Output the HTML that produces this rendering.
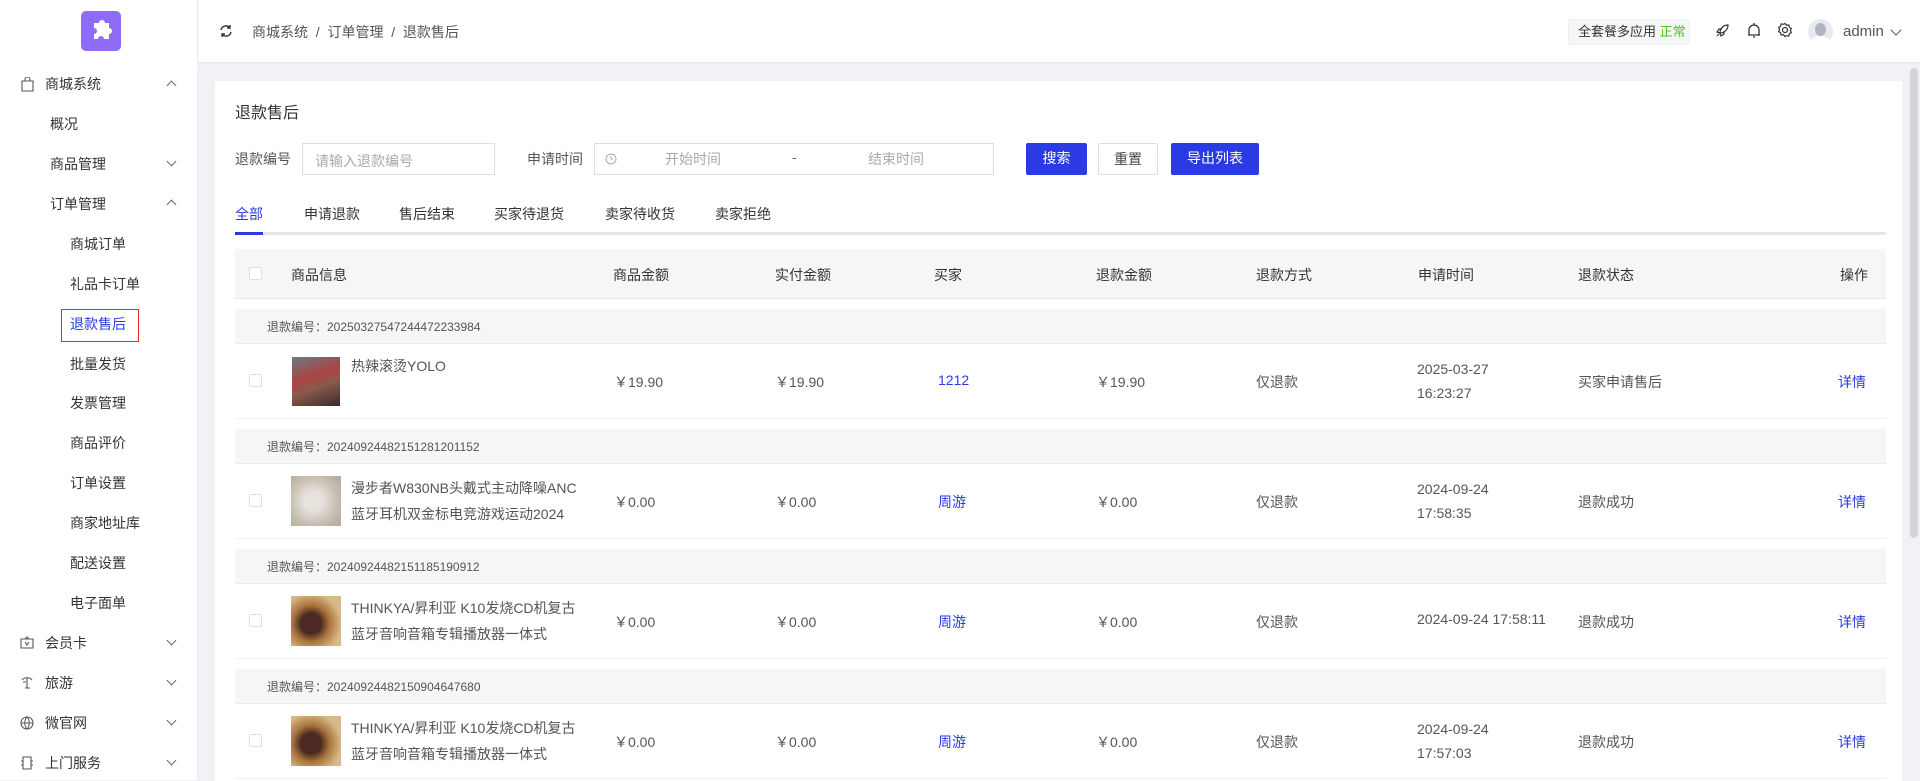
<!DOCTYPE html>
<html><head><meta charset="utf-8">
<style>
*{box-sizing:border-box;margin:0;padding:0}
body{width:1920px;height:780px;overflow:hidden;background:#f0f2f5;font-family:"Liberation Sans","Noto Sans CJK SC",sans-serif;font-size:14px;color:#333;position:relative}
.a{position:absolute;white-space:nowrap}
#side{position:absolute;left:0;top:0;width:198px;height:780px;background:#fff;border-right:1px solid #eef0f3}
#head{position:absolute;left:198px;top:0;width:1722px;height:62px;background:#fff;box-shadow:0 1px 3px rgba(0,0,0,.06)}
#card{position:absolute;left:215px;top:81px;width:1687px;height:700px;background:#fff}
.si{position:absolute;font-size:14px;color:#333;line-height:20px}
.chev{position:absolute;left:168px;width:7px;height:7px;border-left:1px solid #666;border-top:1px solid #666}
.up{transform:rotate(45deg)}
.dn{transform:rotate(225deg)}
.cb{position:absolute;width:13px;height:13px;border:1px solid #dcdfe6;border-radius:2px;background:#fff}
.btn{position:absolute;top:143px;height:32px;border-radius:2px;font-size:14px;line-height:30px;text-align:center}
.gh{position:absolute;left:235px;width:1651px;height:35px;background:#f5f6f8;border-bottom:1px solid #e8eaef}
.row{position:absolute;left:235px;width:1651px;height:75px;border-bottom:1px solid #eef0f3}
.c{position:absolute;font-size:14px;color:#555}
</style></head><body>
<div id="side">
  <div class="a" style="left:81px;top:11px;width:40px;height:40px;background:#8e6cf7;border-radius:5px">
    <svg width="40" height="40" viewBox="0 0 40 40"><path d="M13 12h5a3 3 0 0 1 6 0h4v5a3 3 0 0 1 0 6v5h-5a3 3 0 0 0-6 0h-4v-5a3 3 0 0 0 0-6z" fill="#fff"/></svg>
  </div>
  <svg class="a" style="left:21px;top:77px" width="13" height="15" viewBox="0 0 13 15"><path d="M1 4h11v10H1z M4 4V2.5a2.5 2.5 0 0 1 5 0V4" fill="none" stroke="#555" stroke-width="1.1"/></svg>
  <div class="si" style="left:45px;top:74px">商城系统</div><div class="chev up" style="top:82px"></div>
  <div class="si" style="left:50px;top:114px">概况</div>
  <div class="si" style="left:50px;top:154px">商品管理</div><div class="chev dn" style="top:158px"></div>
  <div class="si" style="left:50px;top:194px">订单管理</div><div class="chev up" style="top:201px"></div>
  <div class="si" style="left:70px;top:234px">商城订单</div>
  <div class="si" style="left:70px;top:274px">礼品卡订单</div>
  <div class="a" style="left:61px;top:309px;width:78px;height:33px;border:1.5px solid #e4262a"></div>
  <div class="si" style="left:70px;top:314px;color:#2a3be3">退款售后</div>
  <div class="si" style="left:70px;top:354px">批量发货</div>
  <div class="si" style="left:70px;top:393px">发票管理</div>
  <div class="si" style="left:70px;top:433px">商品评价</div>
  <div class="si" style="left:70px;top:473px">订单设置</div>
  <div class="si" style="left:70px;top:513px">商家地址库</div>
  <div class="si" style="left:70px;top:553px">配送设置</div>
  <div class="si" style="left:70px;top:593px">电子面单</div>
  <svg class="a" style="left:20px;top:636px" width="14" height="13" viewBox="0 0 14 13"><path d="M1 3h12v9H1z M5 3l2-2 2 2 M5 6l2 3 2-3" fill="none" stroke="#555" stroke-width="1.1"/></svg>
  <div class="si" style="left:45px;top:633px">会员卡</div><div class="chev dn" style="top:637px"></div>
  <svg class="a" style="left:20px;top:676px" width="14" height="14" viewBox="0 0 14 14"><path d="M2 4c2-3 8-3 10 0 M7 2v10 M5 12h5 M3 6h3" fill="none" stroke="#555" stroke-width="1.1"/></svg>
  <div class="si" style="left:45px;top:673px">旅游</div><div class="chev dn" style="top:677px"></div>
  <svg class="a" style="left:20px;top:716px" width="14" height="14" viewBox="0 0 14 14"><circle cx="7" cy="7" r="6" fill="none" stroke="#555" stroke-width="1.1"/><path d="M1 7h12 M7 1c-3 3-3 9 0 12 M7 1c3 3 3 9 0 12" fill="none" stroke="#555" stroke-width="1"/></svg>
  <div class="si" style="left:45px;top:713px">微官网</div><div class="chev dn" style="top:717px"></div>
  <svg class="a" style="left:20px;top:756px" width="14" height="14" viewBox="0 0 14 14"><path d="M3 1h8v12H3z M1 5h2 M11 5h2 M1 9h2 M11 9h2" fill="none" stroke="#555" stroke-width="1.1"/></svg>
  <div class="si" style="left:45px;top:753px">上门服务</div><div class="chev dn" style="top:757px"></div>
</div>
<div id="head">
  <svg class="a" style="left:21px;top:24px" width="14" height="14" viewBox="0 0 14 14"><path d="M2 6a5 5 0 0 1 9-2 M12 8a5 5 0 0 1-9 2 M11 1v3h-3 M3 13v-3h3" fill="none" stroke="#333" stroke-width="1.4"/></svg>
  <div class="a" style="left:54px;top:22px;font-size:14px;color:#555">商城系统 &nbsp;/ &nbsp;订单管理 &nbsp;/ &nbsp;退款售后</div>
  <div class="a" style="left:1370px;top:19px;width:122px;height:26px;background:#f5f6f7;border:1px solid #ebeef2;border-radius:3px;font-size:13px;line-height:24px;padding-left:9px;color:#333">全套餐多应用 <span style="color:#52c41a">正常</span></div>
  <svg class="a" style="left:1516px;top:23px" width="16" height="16" viewBox="0 0 16 16"><path d="M6 10c0-5 4-8 8-8 0 4-3 8-8 8z M6 10l-3-1 2-3h3 M6 10l1 3 3-2v-3 M3 13l2-2" fill="none" stroke="#333" stroke-width="1.2"/></svg>
  <svg class="a" style="left:1549px;top:22px" width="14" height="17" viewBox="0 0 14 17"><path d="M2 13V8a5 5 0 0 1 10 0v5z M1 13h12 M6 15h2 M7 1v2" fill="none" stroke="#333" stroke-width="1.3"/></svg>
  <svg class="a" style="left:1579px;top:22px" width="16" height="16" viewBox="0 0 16 16"><circle cx="8" cy="8" r="2.5" fill="none" stroke="#333" stroke-width="1.2"/><path d="M8 1.5l1.5 1.8 2.3-.4.6 2.3 2 1.3-1 2 1 2-2 1.3-.6 2.3-2.3-.4L8 14.5l-1.5-1.8-2.3.4-.6-2.3-2-1.3 1-2-1-2 2-1.3.6-2.3 2.3.4z" fill="none" stroke="#333" stroke-width="1.2"/></svg>
  <div class="a" style="left:1610px;top:19px;width:25px;height:25px;border-radius:50%;background:#e8eaf0;overflow:hidden"><div style="position:absolute;left:7px;top:4px;width:11px;height:13px;border-radius:50%;background:#b0b4c0"></div><div style="position:absolute;left:3px;top:17px;width:19px;height:12px;border-radius:50%;background:#fff"></div></div>
  <div class="a" style="left:1645px;top:23px;font-size:15px;color:#555">admin</div>
  <div class="a" style="left:1694px;top:26px;width:8px;height:8px;border-right:1px solid #555;border-bottom:1px solid #555;transform:rotate(45deg)"></div>
</div>
<div class="a" style="left:1910px;top:68px;width:8px;height:470px;background:#d3d5d9;border-radius:4px"></div>
<div id="card"></div>
<div class="a" style="left:235px;top:99px;font-size:16px;color:#333">退款售后</div>
<div class="a" style="left:235px;top:149px;color:#555">退款编号</div>
<div class="a" style="left:302px;top:143px;width:193px;height:32px;border:1px solid #dcdfe6;font-size:14px;color:#aaa;padding:7px 12px">请输入退款编号</div>
<div class="a" style="left:527px;top:149px;color:#555">申请时间</div>
<div class="a" style="left:594px;top:143px;width:400px;height:32px;border:1px solid #dcdfe6"></div>
<svg class="a" style="left:605px;top:153px" width="12" height="12" viewBox="0 0 12 12"><circle cx="6" cy="6" r="5" fill="none" stroke="#aaa"/><path d="M6 3v3h2" fill="none" stroke="#aaa"/></svg>
<div class="a" style="left:665px;top:149px;color:#aaa">开始时间</div>
<div class="a" style="left:792px;top:149px;color:#666">-</div>
<div class="a" style="left:868px;top:149px;color:#aaa">结束时间</div>
<div class="btn" style="left:1026px;width:61px;background:#2a3be3;color:#fff">搜索</div>
<div class="btn" style="left:1098px;width:60px;border:1px solid #dcdfe6;color:#444">重置</div>
<div class="btn" style="left:1171px;width:88px;background:#2a3be3;color:#fff">导出列表</div>
<div class="a" style="left:235px;top:204px;color:#2a3be3">全部</div>
<div class="a" style="left:304px;top:204px">申请退款</div>
<div class="a" style="left:399px;top:204px">售后结束</div>
<div class="a" style="left:494px;top:204px">买家待退货</div>
<div class="a" style="left:605px;top:204px">卖家待收货</div>
<div class="a" style="left:715px;top:204px">卖家拒绝</div>
<div class="a" style="left:235px;top:232px;width:1651px;height:3px;background:#e4e7ed"></div>
<div class="a" style="left:235px;top:232px;width:28px;height:3px;background:#2a3be3"></div>
<div class="a" style="left:235px;top:249px;width:1651px;height:50px;background:#f5f6f8;border-bottom:1px solid #e8eaef"></div>
<div class="cb" style="left:249px;top:267px"></div>
<div class="c" style="left:291px;top:265px;color:#333">商品信息</div>
<div class="c" style="left:613px;top:265px;color:#333">商品金额</div>
<div class="c" style="left:775px;top:265px;color:#333">实付金额</div>
<div class="c" style="left:934px;top:265px;color:#333">买家</div>
<div class="c" style="left:1096px;top:265px;color:#333">退款金额</div>
<div class="c" style="left:1256px;top:265px;color:#333">退款方式</div>
<div class="c" style="left:1418px;top:265px;color:#333">申请时间</div>
<div class="c" style="left:1578px;top:265px;color:#333">退款状态</div>
<div class="c" style="left:1840px;top:265px;color:#333">操作</div>

<div class="gh" style="top:309px"></div><div class="c" style="left:267px;top:318px;font-size:12px;color:#555">退款编号：20250327547244472233984</div>
<div class="row" style="top:344px"></div>
<div class="cb" style="left:249px;top:374px"></div>
<div class="a" style="left:292px;top:357px;width:48px;height:49px;background:linear-gradient(160deg,#6a7a82 0%,#a44 40%,#8a5a4a 60%,#3a2a2a 100%)"></div>
<div class="c" style="left:351px;top:356px">热辣滚烫YOLO</div>
<div class="c" style="left:614px;top:372px">￥19.90</div>
<div class="c" style="left:775px;top:372px">￥19.90</div>
<div class="c" style="left:938px;top:372px;color:#2a3be3">1212</div>
<div class="c" style="left:1096px;top:372px">￥19.90</div>
<div class="c" style="left:1256px;top:372px">仅退款</div>
<div class="c" style="left:1417px;top:357px;line-height:24px">2025-03-27<br>16:23:27</div>
<div class="c" style="left:1578px;top:372px">买家申请售后</div>
<div class="c" style="left:1838px;top:372px;color:#2a3be3">详情</div>

<div class="gh" style="top:429px"></div><div class="c" style="left:267px;top:438px;font-size:12px;color:#555">退款编号：20240924482151281201152</div>
<div class="row" style="top:464px"></div>
<div class="cb" style="left:249px;top:494px"></div>
<div class="a" style="left:291px;top:476px;width:50px;height:50px;background:radial-gradient(circle at 45% 50%,#e6e2dc 25%,#c9c1b5 60%,#b2a896 100%)"></div>
<div class="c" style="left:351px;top:475px;line-height:26px">漫步者W830NB头戴式主动降噪ANC<br>蓝牙耳机双金标电竞游戏运动2024</div>
<div class="c" style="left:614px;top:492px">￥0.00</div>
<div class="c" style="left:775px;top:492px">￥0.00</div>
<div class="c" style="left:938px;top:492px;color:#2a3be3">周游</div>
<div class="c" style="left:1096px;top:492px">￥0.00</div>
<div class="c" style="left:1256px;top:492px">仅退款</div>
<div class="c" style="left:1417px;top:477px;line-height:24px">2024-09-24<br>17:58:35</div>
<div class="c" style="left:1578px;top:492px">退款成功</div>
<div class="c" style="left:1838px;top:492px;color:#2a3be3">详情</div>

<div class="gh" style="top:549px"></div><div class="c" style="left:267px;top:558px;font-size:12px;color:#555">退款编号：20240924482151185190912</div>
<div class="row" style="top:584px"></div>
<div class="cb" style="left:249px;top:614px"></div>
<div class="a" style="left:291px;top:596px;width:50px;height:50px;background:radial-gradient(circle at 40% 55%,#4a2a22 25%,#a8743a 45%,#d9b88c 75%)"></div>
<div class="c" style="left:351px;top:595px;line-height:26px">THINKYA/昇利亚 K10发烧CD机复古<br>蓝牙音响音箱专辑播放器一体式</div>
<div class="c" style="left:614px;top:612px">￥0.00</div>
<div class="c" style="left:775px;top:612px">￥0.00</div>
<div class="c" style="left:938px;top:612px;color:#2a3be3">周游</div>
<div class="c" style="left:1096px;top:612px">￥0.00</div>
<div class="c" style="left:1256px;top:612px">仅退款</div>
<div class="c" style="left:1417px;top:611px">2024-09-24 17:58:11</div>
<div class="c" style="left:1578px;top:612px">退款成功</div>
<div class="c" style="left:1838px;top:612px;color:#2a3be3">详情</div>

<div class="gh" style="top:669px"></div><div class="c" style="left:267px;top:678px;font-size:12px;color:#555">退款编号：20240924482150904647680</div>
<div class="row" style="top:704px"></div>
<div class="cb" style="left:249px;top:734px"></div>
<div class="a" style="left:291px;top:716px;width:50px;height:50px;background:radial-gradient(circle at 40% 55%,#4a2a22 25%,#a8743a 45%,#d9b88c 75%)"></div>
<div class="c" style="left:351px;top:715px;line-height:26px">THINKYA/昇利亚 K10发烧CD机复古<br>蓝牙音响音箱专辑播放器一体式</div>
<div class="c" style="left:614px;top:732px">￥0.00</div>
<div class="c" style="left:775px;top:732px">￥0.00</div>
<div class="c" style="left:938px;top:732px;color:#2a3be3">周游</div>
<div class="c" style="left:1096px;top:732px">￥0.00</div>
<div class="c" style="left:1256px;top:732px">仅退款</div>
<div class="c" style="left:1417px;top:717px;line-height:24px">2024-09-24<br>17:57:03</div>
<div class="c" style="left:1578px;top:732px">退款成功</div>
<div class="c" style="left:1838px;top:732px;color:#2a3be3">详情</div>
</body></html>
